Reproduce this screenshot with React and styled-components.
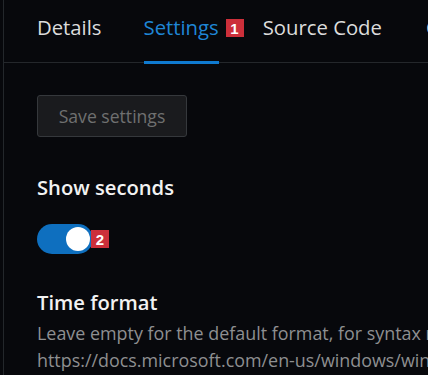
import React from "react";
import styled, { createGlobalStyle } from "styled-components";

const Global = createGlobalStyle`
  html, body {
    margin: 0;
    padding: 0;
    background: #07080c;
    overflow: hidden;
    font-family: "Open Sans", "Noto Sans", sans-serif;
  }
  * { box-sizing: border-box; }
`;

const Page = styled.div`
  width: 428px;
  height: 375px;
  padding-left: 3px;
  background: #07080c;
  overflow: hidden;
`;

const Pane = styled.div`
  height: 100%;
  border-left: 1px solid #23272b;
`;

const TabBar = styled.div`
  display: flex;
  height: 63px;
  padding-left: 11px;
  border-bottom: 1px solid #24272b;
  white-space: nowrap;
`;

const Tab = styled.div`
  position: relative;
  flex: none;
  height: 64px;
  margin: 0 ${(p) => p.$mr ?? 22}px 0 22px;
  padding-top: 14px;
  font-size: 20.3px;
  line-height: 27px;
  color: ${(p) => (p.$active ? "#1f86d6" : "#dcdcdc")};
  border-bottom: 3px solid ${(p) => (p.$active ? "#0f7ad0" : "transparent")};
`;

const Badge = styled.span`
  position: absolute;
  width: 18px;
  height: 18px;
  display: flex;
  align-items: center;
  justify-content: center;
  background: #cc2f3a;
  color: #ffffff;
  font-family: "Liberation Sans", Arial, sans-serif;
  font-weight: 700;
  font-size: 15px;
  line-height: 1;
  top: ${(p) => p.$top}px;
  left: ${(p) => p.$left}px;
`;

const Content = styled.div`
  padding: 32px 0 0 33px;
`;

const SaveButton = styled.button`
  display: block;
  width: 150px;
  height: 42px;
  padding: 0;
  border: 1px solid #35383c;
  border-radius: 3px;
  background: #1a1b1e;
  color: #6f7070;
  font-family: "Open Sans", "Noto Sans", sans-serif;
  font-size: 17.6px;
  text-align: center;
`;

const Label = styled.div`
  font-size: 20.2px;
  font-weight: 600;
  line-height: 27px;
  color: #f2f2f2;
  margin-top: ${(p) => p.$mt}px;
`;

const ToggleWrap = styled.div`
  position: relative;
  width: 56px;
  height: 30px;
  margin-top: 23px;
`;

const Toggle = styled.div`
  width: 56px;
  height: 30px;
  border-radius: 15px;
  background: #0e6fbf;
  display: flex;
  align-items: center;
  justify-content: flex-end;
  padding-right: 3px;
`;

const Knob = styled.div`
  width: 24px;
  height: 24px;
  border-radius: 50%;
  background: #ffffff;
`;

const Description = styled.div`
  width: 600px;
  margin-top: 4px;
  font-size: 17.9px;
  line-height: 27px;
  color: #8e8f91;
  overflow-wrap: anywhere;
`;

export default function App() {
  return (
    <>
      <Global />
      <Page>
        <Pane>
          <TabBar>
            <Tab $mr={20}>Details</Tab>
            <Tab $active>
              Settings
              <Badge $top={19} $left={82}>1</Badge>
            </Tab>
            <Tab>Source Code</Tab>
            <Tab>Changelog</Tab>
          </TabBar>
          <Content>
            <SaveButton disabled>Save settings</SaveButton>
            <Label $mt={37}>Show seconds</Label>
            <ToggleWrap>
              <Toggle>
                <Knob />
              </Toggle>
              <Badge $top={6} $left={54}>2</Badge>
            </ToggleWrap>
            <Label $mt={35}>Time format</Label>
            <Description>
              Leave empty for the default format, for syntax reference see
              https://docs.microsoft.com/en-us/windows/win32/api/datetimeapi/nf-datetimeapi-gettimeformatex
            </Description>
          </Content>
        </Pane>
      </Page>
    </>
  );
}
